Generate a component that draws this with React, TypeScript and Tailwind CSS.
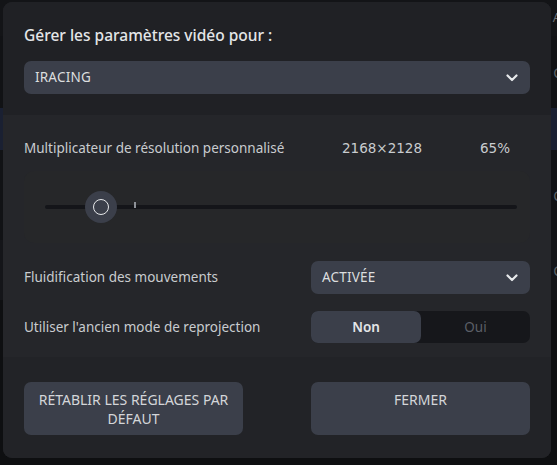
import { useState } from "react";

const Chevron = () => (
  <svg width="12" height="8" viewBox="0 0 12 8" fill="none">
    <path d="M1.5 1.5 L6 6 L10.5 1.5" stroke="#e8eaec" strokeWidth="2.2" strokeLinecap="round" strokeLinejoin="round" />
  </svg>
);

const Select = ({ value, className }: { value: string; className?: string }) => (
  <div className={`flex items-center justify-between h-[33px] rounded-[7px] bg-[#3b3f4a] pl-[11px] pr-[12px] ${className ?? ""}`}>
    <span className="text-[13.5px] tracking-[0.2px] text-[#dcdedf]">{value}</span>
    <Chevron />
  </div>
);

const App = () => {
  const [legacy, setLegacy] = useState<boolean>(false);
  return (
    <div className="relative w-[557px] h-[465px] overflow-hidden bg-[#0e0f11]" style={{ fontFamily: '"Noto Sans", "Open Sans", sans-serif' }}>
      {/* page behind the dialog */}
      <div className="flex flex-col w-full h-full">
        <div className="h-[36px] bg-[#131417] flex justify-end items-center text-[13px] text-[#6b6f75]"><span className="-mr-[4px]">A</span></div>
        <div className="h-[72px] bg-[#111215] flex justify-end items-center text-[14px] text-[#5c6066]"><span className="-mr-[5px]">C</span></div>
        <div className="h-[42px] bg-[#1a2032]"></div>
        <div className="h-[90px] bg-[#111215] flex justify-end items-center text-[14px] text-[#5c6066]"><span className="-mr-[5px]">C</span></div>
        <div className="h-[60px] bg-[#141519] flex justify-end items-center text-[14px] text-[#5c6066]"><span className="-mr-[5px]">C</span></div>
        <div className="flex-1 bg-[#0e0f11]"></div>
      </div>

      {/* dialog */}
      <div className="absolute left-[3px] top-[2px] w-[548px] h-[456px] rounded-[9px] overflow-hidden bg-[#222327] flex flex-col">
        <section className="h-[113px] bg-[#202125] px-[21px] pt-[22px]">
          <h1 className="text-[15.5px] font-medium text-[#e4e6e8] leading-[22px]">Gérer les paramètres vidéo pour :</h1>
          <Select value="IRACING" className="mt-[15px]" />
        </section>

        <section className="flex-1 bg-[#25262a] px-[21px] pt-[22px]">
          <div className="flex items-center h-[22px] text-[13.5px] text-[#c9cccf]">
            <span className="w-[318px]">Multiplicateur de résolution personnalisé</span>
            <span className="w-[138px] text-[13.5px]" style={{ fontFamily: '"DejaVu Sans", sans-serif' }}>2168×2128</span>
            <span className="text-[13.5px]" style={{ fontFamily: '"DejaVu Sans", sans-serif' }}>65%</span>
          </div>

          <div className="mt-[12px] h-[72px] rounded-[10px] bg-[#262729] flex items-center pl-[21px] pr-[13px]">
            <div className="relative w-full h-[4px] rounded-full bg-[#141519]">
              <div className="absolute left-[89px] top-[-3px] w-[2px] h-[6px] bg-[#8e9298]"></div>
              <div className="absolute left-[40px] top-[-14px] w-[32px] h-[32px] rounded-full bg-[#3b3f4a] flex items-center justify-center">
                <div className="w-[16px] h-[16px] rounded-full border-[1.5px] border-[#e6e8ea]"></div>
              </div>
            </div>
          </div>

          <div className="mt-[18px] flex items-center justify-between">
            <span className="text-[13.5px] text-[#c9cccf]">Fluidification des mouvements</span>
            <Select value="ACTIVÉE" className="w-[219px]" />
          </div>

          <div className="mt-[17px] flex items-center justify-between">
            <span className="text-[13.5px] text-[#c9cccf]">Utiliser l'ancien mode de reprojection</span>
            <div className="w-[219px] h-[32px] rounded-[7px] bg-[#16171b] flex text-[13.5px]">
              <button onClick={() => setLegacy(false)} className={`w-[110px] rounded-[7px] ${!legacy ? "bg-[#3b3f4a] font-semibold text-[#e4e6e8]" : "text-[#5b5f67]"}`}>Non</button>
              <button onClick={() => setLegacy(true)} className={`flex-1 rounded-[7px] ${legacy ? "bg-[#3b3f4a] font-semibold text-[#e4e6e8]" : "text-[#5b5f67]"}`}>Oui</button>
            </div>
          </div>
        </section>

        <section className="h-[101px] bg-[#222327] px-[21px] pt-[25px] flex justify-between">
          <button className="w-[219px] h-[53px] rounded-[7px] bg-[#3b3f4a] text-[14px] leading-[19px] text-[#d4d6d9] px-[4px] pt-[8px] flex flex-col items-center">
            <span>RÉTABLIR LES RÉGLAGES PAR</span>
            <span>DÉFAUT</span>
          </button>
          <button className="w-[219px] h-[53px] rounded-[7px] bg-[#3b3f4a] text-[14px] leading-[19px] text-[#d4d6d9] pt-[8px] flex justify-center">
            FERMER
          </button>
        </section>
      </div>
    </div>
  );
};

export default App;
